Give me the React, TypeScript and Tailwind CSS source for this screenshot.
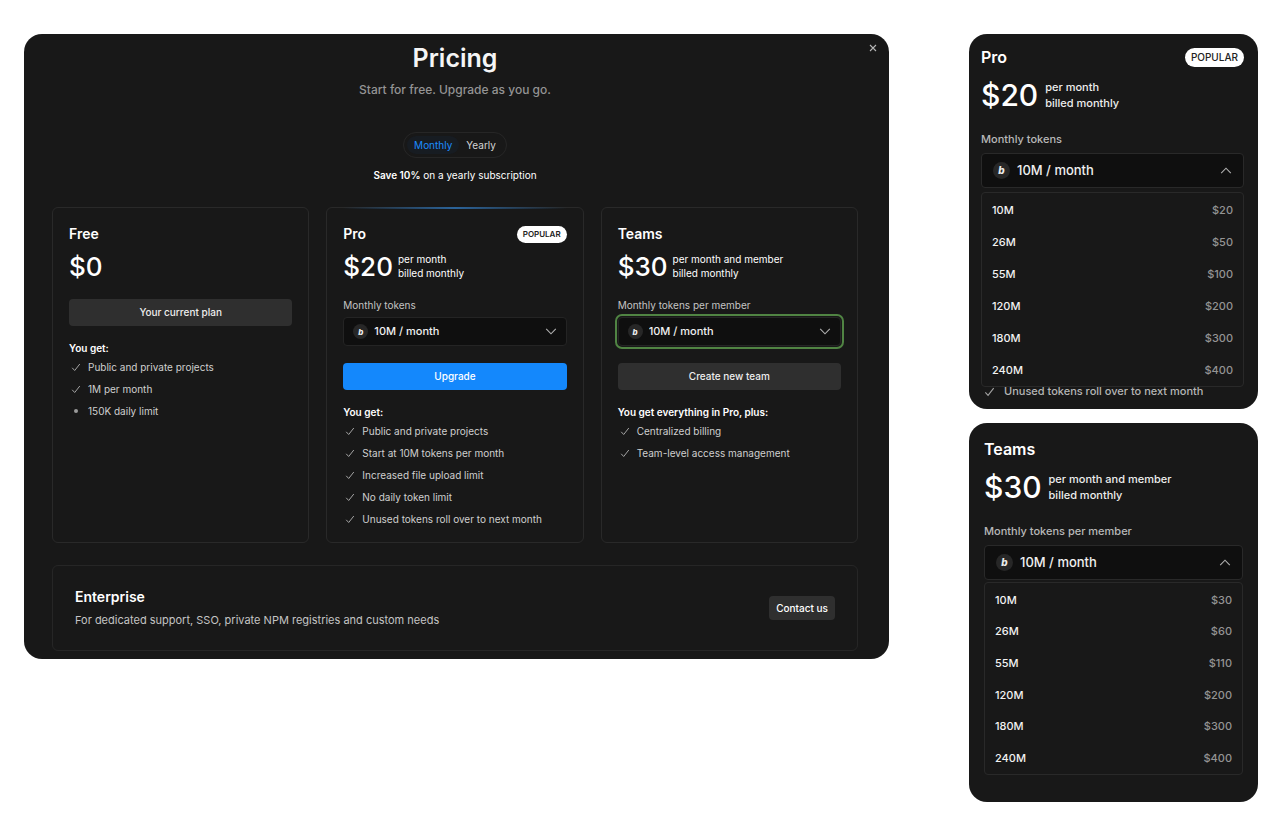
import { useState } from "react";
import type { ReactNode } from "react";

type Row = { amount: string; price: string };

const PRO_TIERS: Row[] = [
  { amount: "10M", price: "$20" },
  { amount: "26M", price: "$50" },
  { amount: "55M", price: "$100" },
  { amount: "120M", price: "$200" },
  { amount: "180M", price: "$300" },
  { amount: "240M", price: "$400" },
];

const TEAM_TIERS: Row[] = [
  { amount: "10M", price: "$30" },
  { amount: "26M", price: "$60" },
  { amount: "55M", price: "$110" },
  { amount: "120M", price: "$200" },
  { amount: "180M", price: "$300" },
  { amount: "240M", price: "$400" },
];

function Check({ className }: { className: string }) {
  return (
    <svg viewBox="0 0 10 10" className={className} fill="none" stroke="currentColor" strokeWidth="1" aria-hidden="true">
      <path d="M1.2 5.8 3.7 8.5 8.8 2" />
    </svg>
  );
}

function Chevron({ className }: { className: string }) {
  return (
    <svg viewBox="0 0 12 12" className={className} fill="none" stroke="currentColor" strokeWidth="1.1" aria-hidden="true">
      <path d="M1.2 3.8 6 8.8 10.8 3.8" />
    </svg>
  );
}

function Bolt({ className }: { className: string }) {
  return (
    <span
      aria-hidden="true"
      className={`flex items-center justify-center rounded-full bg-[#272727] font-extrabold italic text-[#ececec] ${className}`}
    >
      b
    </span>
  );
}

function Feature({ children, dot = false }: { children: ReactNode; dot?: boolean }) {
  return (
    <li className="flex h-[22px] items-center gap-[7px] pl-0.5">
      {dot ? (
        <span className="flex w-[10px] justify-center">
          <span className="size-1 rounded-full bg-[#9a9a9a]" />
        </span>
      ) : (
        <Check className="size-[10px] text-[#a3a3a3]" />
      )}
      <span>{children}</span>
    </li>
  );
}

function Features({ title, children }: { title: string; children: ReactNode }) {
  return (
    <div className="mt-[14px] text-[10px] leading-4">
      <h4 className="font-semibold text-white">{title}</h4>
      <ul className="text-[#cfcfcf]">{children}</ul>
    </div>
  );
}

function Price({ amount, unit }: { amount: string; unit?: string }) {
  return (
    <div className="mt-[6px] flex h-8 items-center gap-[5px]">
      <span className="text-[26px] font-medium text-white">{amount}</span>
      {unit && (
        <p className="text-[10px] leading-[14px] text-white">
          {unit}
          <br />
          billed monthly
        </p>
      )}
    </div>
  );
}

function TokenSelect({ id, label, tiers, focused = false }: { id: string; label: string; tiers: Row[]; focused?: boolean }) {
  return (
    <div className="mt-[15px]">
      <label htmlFor={id} className="block text-[10px] leading-4 text-[#c4c4c4]">
        {label}
      </label>
      <div className="relative mt-1">
        <select
          id={id}
          className={`block h-[29px] w-full appearance-none rounded border border-[#242424] bg-[#0f0f0f] pl-[30px] text-[11px] font-medium text-[#f0f0f0] ${
            focused ? "outline-2 outline-offset-1 outline-[#508443]" : "outline-none"
          }`}
        >
          {tiers.map((t) => (
            <option key={t.amount}>{t.amount} / month</option>
          ))}
        </select>
        <Bolt className="pointer-events-none absolute top-[7px] left-[10px] size-[15px] text-[8px]" />
        <Chevron className="pointer-events-none absolute top-2 right-[10px] size-3 text-[#b0b0b0]" />
      </div>
    </div>
  );
}

function PlanCard({ name, badge, glow = false, children }: { name: string; badge?: string; glow?: boolean; children: ReactNode }) {
  return (
    <section className="relative rounded-md border border-[#292929] px-4 pt-4 pb-3">
      {glow && (
        <div className="absolute -top-px right-4 left-4 h-[2px] bg-linear-to-r from-transparent via-[#2b6399] to-transparent" />
      )}
      <div className="flex h-5 items-center justify-between">
        <h3 className="text-sm font-semibold text-white">{name}</h3>
        {badge && (
          <span className="flex h-[17px] items-center rounded-full bg-white px-[6px] text-[8px] font-semibold text-[#222]">
            {badge}
          </span>
        )}
      </div>
      {children}
    </section>
  );
}

function OpenPlan({
  name,
  amount,
  unit,
  label,
  tiers,
  badge,
  className,
  listClass,
  footer,
}: {
  name: string;
  amount: string;
  unit: string;
  label: string;
  tiers: Row[];
  badge?: string;
  className: string;
  listClass: string;
  footer?: ReactNode;
}) {
  const id = `${name.toLowerCase()}-open`;
  return (
    <section className={`rounded-[18px] bg-[#181818] ${className}`}>
      <div className="flex h-5 items-center justify-between">
        <h3 className="text-base font-semibold text-white">{name}</h3>
        {badge && (
          <span className="flex h-[19px] items-center rounded-full bg-white px-[6px] text-[10px] font-medium text-[#222]">
            {badge}
          </span>
        )}
      </div>
      <div className="mt-2 flex h-10 items-center gap-[7px]">
        <span className="text-[30px] font-medium text-white">{amount}</span>
        <p className="text-[11px] leading-4 font-medium text-[#ededed]">
          {unit}
          <br />
          billed monthly
        </p>
      </div>
      <div id={`${id}-label`} className="mt-4 text-[11px] leading-4 font-medium text-[#b8b8b8]">
        {label}
      </div>
      <button
        type="button"
        aria-haspopup="listbox"
        aria-expanded="true"
        aria-labelledby={`${id}-label ${id}-value`}
        className="mt-[6px] flex h-[35px] w-full items-center rounded border border-[#292929] bg-[#0f0f0f] px-[11px] text-[#f0f0f0]"
      >
        <Bolt className="size-[17px] text-[10px]" />
        <span id={`${id}-value`} className="ml-[7px] text-[13px] font-medium">
          10M / month
        </span>
        <Chevron className="ml-auto size-3 rotate-180 text-[#b0b0b0]" />
      </button>
      <ul
        role="listbox"
        aria-labelledby={`${id}-label`}
        className={`grid rounded border border-[#292929] px-[10px] pt-px text-[11px] font-medium ${listClass}`}
      >
        {tiers.map((t, i) => (
          <li key={t.amount} role="option" aria-selected={i === 0} className="flex items-center justify-between">
            <span className="text-[#f2f2f2]">{t.amount}</span>
            <span className="text-[#949494]">{t.price}</span>
          </li>
        ))}
      </ul>
      {footer}
    </section>
  );
}

export default function App() {
  const [yearly, setYearly] = useState(false);
  return (
    <div className="flex min-h-screen items-start gap-20 bg-white pt-[34px] pr-[13px] pl-6 font-['Inter',sans-serif]">
      <main className="relative min-w-0 flex-1 rounded-[18px] bg-[#181818] pt-2 pr-[31px] pb-2 pl-7">
        <button type="button" aria-label="Close" className="absolute top-2 right-[10px] p-[2px] text-[#b5b5b5]">
          <svg viewBox="0 0 8 8" className="size-2" fill="none" stroke="currentColor" strokeWidth="1.1">
            <path d="M1 1 7 7M7 1 1 7" />
          </svg>
        </button>

        <header className="flex flex-col items-center">
          <h1 className="text-[25px] leading-8 font-semibold text-[#f5f5f5]">Pricing</h1>
          <p className="mt-[6px] text-xs leading-5 font-medium text-[#949494]">Start for free. Upgrade as you go.</p>
          <div className="mt-8 flex h-[26px] items-center rounded-full border border-[#262626] px-[3px] text-[10px]">
            <button
              type="button"
              aria-pressed={!yearly}
              onClick={() => setYearly(false)}
              className={`h-[18px] rounded-full px-[7px] ${yearly ? "text-[#d4d4d4]" : "bg-[#171c22] text-[#1c8cff]"}`}
            >
              Monthly
            </button>
            <button
              type="button"
              aria-pressed={yearly}
              onClick={() => setYearly(true)}
              className={`h-[18px] rounded-full px-[7px] ${yearly ? "bg-[#171c22] text-[#1c8cff]" : "text-[#d4d4d4]"}`}
            >
              Yearly
            </button>
          </div>
          <p className="mt-[9px] text-[10px] leading-4 text-white">
            <strong className="font-semibold">Save 10%</strong> on a yearly subscription
          </p>
        </header>

        <div className="mt-6 grid grid-cols-3 gap-[17px]">
          <PlanCard name="Free">
            <Price amount="$0" />
            <button type="button" className="mt-[17px] block h-[27px] w-full rounded bg-[#2f2f2f] text-[10px] font-medium text-[#ededed]">
              Your current plan
            </button>
            <Features title="You get:">
              <Feature>Public and private projects</Feature>
              <Feature>1M per month</Feature>
              <Feature dot>150K daily limit</Feature>
            </Features>
          </PlanCard>

          <PlanCard name="Pro" badge="POPULAR" glow>
            <Price amount="$20" unit="per month" />
            <TokenSelect id="pro-tokens" label="Monthly tokens" tiers={PRO_TIERS} />
            <button type="button" className="mt-[17px] block h-[27px] w-full rounded bg-[#1488fc] text-[10px] font-medium text-white">
              Upgrade
            </button>
            <Features title="You get:">
              <Feature>Public and private projects</Feature>
              <Feature>Start at 10M tokens per month</Feature>
              <Feature>Increased file upload limit</Feature>
              <Feature>No daily token limit</Feature>
              <Feature>Unused tokens roll over to next month</Feature>
            </Features>
          </PlanCard>

          <PlanCard name="Teams">
            <Price amount="$30" unit="per month and member" />
            <TokenSelect id="team-tokens" label="Monthly tokens per member" tiers={TEAM_TIERS} focused />
            <button type="button" className="mt-[17px] block h-[27px] w-full rounded bg-[#2f2f2f] text-[10px] font-medium text-[#ededed]">
              Create new team
            </button>
            <Features title="You get everything in Pro, plus:">
              <Feature>Centralized billing</Feature>
              <Feature>Team-level access management</Feature>
            </Features>
          </PlanCard>
        </div>

        <section className="mt-[22px] flex h-[86px] items-center justify-between rounded-md border border-[#262626] px-[22px]">
          <div>
            <h3 className="text-sm leading-5 font-semibold text-white">Enterprise</h3>
            <p className="mt-[3px] text-[11px] leading-5 text-[#c4c4c4]">
              For dedicated support, SSO, private NPM registries and custom needs
            </p>
          </div>
          <button type="button" className="h-6 rounded bg-[#2f2f2f] px-[7px] text-[10px] font-medium text-white">
            Contact us
          </button>
        </section>
      </main>

      <aside className="flex w-[289px] shrink-0 flex-col gap-[14px]">
        <OpenPlan
          name="Pro"
          amount="$20"
          unit="per month"
          label="Monthly tokens"
          tiers={PRO_TIERS}
          badge="POPULAR"
          className="pt-[13px] pr-[14px] pb-[13px] pl-3"
          listClass="mt-1 h-[195px]"
          footer={
            <p className="flex h-[9px] items-center gap-[9px] pl-[3px] text-[11px] leading-[9px] font-medium text-[#b5b5b5]">
              <Check className="size-[11px] text-[#a3a3a3]" />
              Unused tokens roll over to next month
            </p>
          }
        />
        <OpenPlan
          name="Teams"
          amount="$30"
          unit="per month and member"
          label="Monthly tokens per member"
          tiers={TEAM_TIERS}
          className="px-[15px] pt-4 pb-[27px]"
          listClass="mt-[2px] h-[193px]"
        />
      </aside>
    </div>
  );
}
